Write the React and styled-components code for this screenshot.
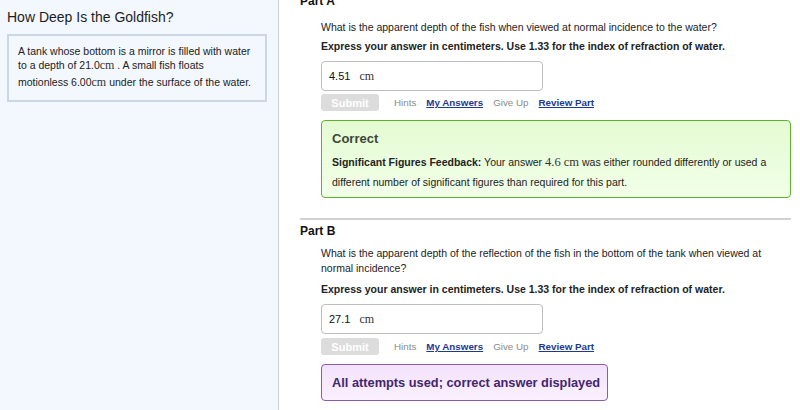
import React from "react";
import styled, { createGlobalStyle } from "styled-components";

const Global = createGlobalStyle`
  html, body { margin: 0; padding: 0; background: #fff; }
  body { font-family: "Liberation Sans", Arial, sans-serif; color: #222; overflow: hidden; }
`;

const Page = styled.div`
  display: flex;
  width: 800px;
  height: 410px;
  overflow: hidden;
`;

const Sidebar = styled.aside`
  width: 279px;
  flex: none;
  background: #f3f7fe;
  border-right: 1px solid #c9d1dd;
  padding: 10px 11px 0 7px;
  box-sizing: border-box;
`;

const Title = styled.h1`
  margin: 0;
  font-size: 14px;
  font-weight: normal;
  line-height: 14px;
  color: #1e1e1e;
`;

const Problem = styled.div`
  margin-top: 10px;
  border: 2px solid #ccd7e6;
  padding: 8px 6px 11px 9px;
  font-size: 10.5px;
  line-height: 14px;
  color: #222;
`;

const Math = styled.span`
  font-family: "Liberation Serif", "Times New Roman", serif;
  font-size: ${(p) => p.size || 12}px;
  color: #333;
`;

const ThirdLine = styled.span`
  display: inline-block;
  margin-top: 3px;
`;

const Main = styled.main`
  flex: 1;
  padding: 0 9px 0 21px;
  margin-top: -6px;
`;

const PartHead = styled.h2`
  margin: 0;
  font-size: 12px;
  font-weight: bold;
  line-height: 14px;
  color: #111;
`;

const PartBody = styled.div`
  padding-left: 21px;
  margin-top: ${(p) => p.top}px;
`;

const Question = styled.p`
  margin: 0;
  font-size: 10.5px;
  line-height: 15px;
  color: #222;
  padding-right: 20px;
`;

const Instruction = styled.p`
  margin: ${(p) => p.top}px 0 0;
  font-size: 10.5px;
  line-height: 15px;
  font-weight: bold;
  color: #222;
`;

const AnswerBox = styled.div`
  margin-top: ${(p) => p.top}px;
  width: 222px;
  height: 30px;
  box-sizing: border-box;
  border: 1px solid #bdbdbd;
  border-radius: 4px;
  display: flex;
  align-items: center;
  padding-left: 7px;
  gap: 9px;
  font-size: 11px;
  color: #111;
  background: #fff;
`;

const Actions = styled.div`
  margin-top: ${(p) => p.top}px;
  display: flex;
  align-items: center;
  height: 17px;
`;

const SubmitButton = styled.button`
  width: 58px;
  height: 17px;
  border: none;
  border-radius: 3px;
  background: #dcdcdc;
  color: #fff;
  font-family: "Liberation Sans", Arial, sans-serif;
  font-size: 11px;
  font-weight: bold;
  padding: 0;
  margin-right: 15px;
`;

const Action = styled.span`
  font-size: 9.8px;
  margin-right: 10px;
  color: ${(p) => (p.link ? "#1d3a8f" : "#8a8a8a")};
  font-weight: ${(p) => (p.link ? "bold" : "normal")};
  text-decoration: ${(p) => (p.link ? "underline" : "none")};
`;

const CorrectBox = styled.div`
  margin-top: 9px;
  border: 1.5px solid #5ab52c;
  border-radius: 4px;
  background: linear-gradient(#e4fbd2, #f1ffe8);
  padding: 10px 18px 5px 10px;
`;

const FeedbackTitle = styled.div`
  font-size: 13px;
  line-height: 16px;
  font-weight: bold;
  color: #3d4639;
`;

const FeedbackText = styled.p`
  margin: 5px 0 0;
  font-size: 10.5px;
  line-height: 20px;
  color: #222;
`;

const Divider = styled.hr`
  margin: 20px 0 0;
  border: none;
  border-top: 2px solid #d2d2d2;
`;

const PartSection = styled.section`
  margin-top: ${(p) => p.top}px;
`;

const AttemptsBox = styled.div`
  margin-top: 9px;
  width: 287px;
  height: 37px;
  box-sizing: border-box;
  border: 1.5px solid #8a5cab;
  border-radius: 4px;
  background: linear-gradient(#f3e2fb, #faf0ff);
  display: flex;
  align-items: center;
  padding-left: 10px;
  font-size: 12.8px;
  font-weight: bold;
  white-space: nowrap;
  color: #43266e;
`;

function ActionRow({ top }) {
  return (
    <Actions top={top}>
      <SubmitButton>Submit</SubmitButton>
      <Action>Hints</Action>
      <Action link>My Answers</Action>
      <Action>Give Up</Action>
      <Action link>Review Part</Action>
    </Actions>
  );
}

export default function App() {
  return (
    <>
      <Global />
      <Page>
        <Sidebar>
          <Title>How Deep Is the Goldfish?</Title>
          <Problem>
            A tank whose bottom is a mirror is filled with water to a depth of 21.0<Math>cm</Math> . A small fish floats{" "}
            <ThirdLine>
              motionless 6.00<Math>cm</Math> under the surface of the water.
            </ThirdLine>
          </Problem>
        </Sidebar>
        <Main>
          <PartHead>Part A</PartHead>
          <PartBody top={12}>
            <Question>What is the apparent depth of the fish when viewed at normal incidence to the water?</Question>
            <Instruction top={4}>Express your answer in centimeters. Use 1.33 for the index of refraction of water.</Instruction>
            <AnswerBox top={7}>
              <span>4.51</span>
              <Math>cm</Math>
            </AnswerBox>
            <ActionRow top={3} />
            <CorrectBox>
              <FeedbackTitle>Correct</FeedbackTitle>
              <FeedbackText>
                <b>Significant Figures Feedback:</b> Your answer <Math size={12.5}>4.6 cm</Math> was either rounded differently or used a different number of significant figures than required for this part.
              </FeedbackText>
            </CorrectBox>
          </PartBody>
          <Divider />
          <PartSection top={4}>
            <PartHead>Part B</PartHead>
            <PartBody top={8}>
              <Question>What is the apparent depth of the reflection of the fish in the bottom of the tank when viewed at normal incidence?</Question>
              <Instruction top={6}>Express your answer in centimeters. Use 1.33 for the index of refraction of water.</Instruction>
              <AnswerBox top={7}>
                <span>27.1</span>
                <Math>cm</Math>
              </AnswerBox>
              <ActionRow top={4} />
              <AttemptsBox>All attempts used; correct answer displayed</AttemptsBox>
            </PartBody>
          </PartSection>
        </Main>
      </Page>
    </>
  );
}
